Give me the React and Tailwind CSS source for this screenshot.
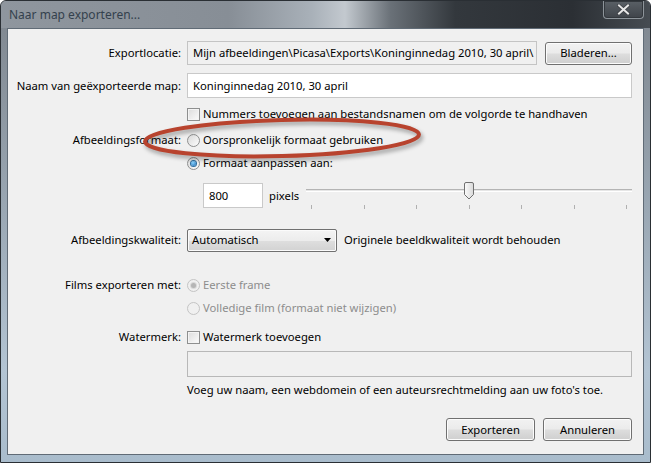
import React from 'react';

function Checkbox() {
    return (
        <span className="inline-block h-[13px] w-[13px] shrink-0 border border-[#8e8f8f] bg-[linear-gradient(135deg,#dcdcdc,#fbfbfb)] shadow-[inset_0_0_0_1px_#f4f4f4]" />
    );
}

function Radio({ checked = false, disabled = false }) {
    return (
        <span
            className={
                'relative inline-flex h-[13px] w-[13px] shrink-0 items-center justify-center rounded-full border ' +
                (disabled
                    ? 'border-[#c4c4c4] bg-[#f0f0f0]'
                    : 'border-[#8e8f8f] bg-[linear-gradient(135deg,#d8d8d8,#fdfdfd)]')
            }
        >
            {checked && (
                <span
                    className={
                        'h-[5px] w-[5px] rounded-full ' +
                        (disabled
                            ? 'bg-[#b5b5b5] shadow-[0_0_0_1px_#d9d9d9]'
                            : 'bg-[radial-gradient(circle_at_40%_35%,#8ad4ff,#1867b1)] shadow-[0_0_0_1px_#2d6e9e]')
                    }
                />
            )}
        </span>
    );
}

function Button({ children, className = '' }) {
    return (
        <div
            className={
                'flex h-[23px] items-center justify-center rounded-[3px] border border-[#707070] bg-[linear-gradient(180deg,#f2f2f2_0%,#ebebeb_48%,#dddddd_52%,#cfcfcf_100%)] shadow-[inset_0_0_0_1px_#fcfcfc] ' +
                className
            }
        >
            {children}
        </div>
    );
}

function Row({ label, className = '', children }) {
    return (
        <div className={'flex items-center ' + className}>
            <div className="w-[173px] shrink-0 text-right">{label}</div>
            <div className="ml-[6px] flex min-w-0 flex-1 items-center">{children}</div>
        </div>
    );
}

export default function App() {
    const ticks = [0, 1, 2, 3, 4, 5, 6];

    return (
        <div className="relative h-[463px] w-[651px] overflow-hidden bg-white font-['Noto_Sans',sans-serif] text-[11.25px] leading-none text-black">
            {/* Window frame */}
            <div className="flex h-full flex-col rounded-t-[6px] border border-[#2a2f34] bg-[linear-gradient(180deg,#7e858d_0%,#9aa7b3_45%,#b3c4d3_80%,#a9bccc_100%)]">
                {/* Title bar */}
                <div className="flex h-[27px] shrink-0 rounded-t-[5px] bg-[linear-gradient(90deg,#8f969e_0%,#878e96_35%,#a9b1b9_48%,#c3c9cf_53%,#6a7178_60%,#33383d_70%,#2b2f34_88%,#464c52_100%)]">
                    <div className="pl-[8px] pt-[8px] text-[12px] text-[#34414d]">Naar map exporteren...</div>
                    <div className="ml-auto mr-[6px] flex h-[18px] w-[41px] items-center justify-center rounded-b-[4px] border border-t-0 border-[#8d949a] bg-[linear-gradient(180deg,#5a6066,#3f444a)] shadow-[inset_0_0_0_1px_#33383d]">
                        <svg width="13" height="11" viewBox="0 0 13 11">
                            <path d="M2 1.5 L11 9.5 M11 1.5 L2 9.5" stroke="#3b3f44" strokeWidth="3.6" strokeLinecap="square" />
                            <path d="M2 1.5 L11 9.5 M11 1.5 L2 9.5" stroke="#e6e6e6" strokeWidth="2" strokeLinecap="square" />
                        </svg>
                    </div>
                </div>

                {/* Client area */}
                <div className="flex min-h-0 flex-1 px-[6px] pb-[7px]">
                    <div className="flex flex-1 flex-col border border-[#606b76] bg-[#f0f0f0] pr-[11px]">
                        <Row label="Exportlocatie:" className="mt-[12px] h-[24px]">
                            <div className="flex h-[24px] min-w-0 flex-1 items-center overflow-hidden whitespace-nowrap border border-[#c4c4c4] bg-[#f0f0f0] pl-[5px]">
                                Mijn afbeeldingen\Picasa\Exports\Koninginnedag 2010, 30 april\
                            </div>
                            <Button className="ml-[8px] w-[87px] shrink-0">Bladeren...</Button>
                        </Row>

                        <Row label="Naam van geëxporteerde map:" className="mt-[8px] h-[25px]">
                            <div className="flex h-[25px] flex-1 items-center border border-[#c9c9c9] bg-white pl-[5px]">
                                Koninginnedag 2010, 30 april
                            </div>
                        </Row>

                        <Row label="" className="mt-[8px] h-[16px]">
                            <Checkbox />
                            <span className="ml-[3px]">Nummers toevoegen aan bestandsnamen om de volgorde te handhaven</span>
                        </Row>

                        <Row label="Afbeeldingsformaat:" className="mt-[10px] h-[16px]">
                            <Radio />
                            <span className="ml-[3px]">Oorspronkelijk formaat gebruiken</span>
                        </Row>

                        <Row label="" className="mt-[7px] h-[16px]">
                            <Radio checked />
                            <span className="ml-[3px]">Formaat aanpassen aan:</span>
                        </Row>

                        <Row label="" className="mt-[12px] h-[25px]">
                            <div className="ml-[16px] h-[25px] w-[60px] shrink-0 border border-[#c9c9c9] bg-white pl-[5px] pt-[6px]">
                                800
                            </div>
                            <span className="ml-[6px] w-[37px] shrink-0">pixels</span>
                            {/* Slider */}
                            <div className="flex h-[27px] flex-1 flex-col self-start">
                                <div className="relative h-[18px]">
                                    <div className="absolute left-0 right-0 top-[7px] h-[3px] border-y border-t-[#b4b4b4] border-b-white bg-[#e6e6e6]" />
                                    <svg className="absolute left-[calc(50%-6px)] top-0" width="12" height="18" viewBox="0 0 12 18">
                                        <defs>
                                            <linearGradient id="thumb" x1="0" y1="0" x2="1" y2="0">
                                                <stop offset="0" stopColor="#fbfbfb" />
                                                <stop offset="1" stopColor="#d9d9d9" />
                                            </linearGradient>
                                        </defs>
                                        <path d="M1.5 2 Q1.5 0.5 3 0.5 H9 Q10.5 0.5 10.5 2 V12.5 L6 17 L1.5 12.5 Z" fill="url(#thumb)" stroke="#707070" />
                                    </svg>
                                </div>
                                <div className="mt-[5px] flex h-[4px] justify-between px-[5px]">
                                    {ticks.map((t) => (
                                        <span key={t} className="h-[4px] w-px bg-[#b0b0b0]" />
                                    ))}
                                </div>
                            </div>
                        </Row>

                        <Row label="Afbeeldingskwaliteit:" className="mt-[20px] h-[24px]">
                            <div className="flex h-[23px] w-[150px] shrink-0 items-center rounded-[2px] border border-[#707070] bg-[linear-gradient(180deg,#f4f4f4_0%,#ececec_50%,#dedede_52%,#d2d2d2_100%)] pl-[4px] pr-[5px] shadow-[inset_0_0_0_1px_#fbfbfb]">
                                <span>Automatisch</span>
                                <svg className="ml-auto" width="7" height="4" viewBox="0 0 7 4">
                                    <path d="M0 0 H7 L3.5 4 Z" fill="#000" />
                                </svg>
                            </div>
                            <span className="ml-[7px]">Originele beeldkwaliteit wordt behouden</span>
                        </Row>

                        <Row label="Films exporteren met:" className="mt-[25px] h-[16px]">
                            <Radio checked disabled />
                            <span className="ml-[3px] text-[#8d8d8d]">Eerste frame</span>
                        </Row>

                        <Row label="" className="mt-[7px] h-[16px]">
                            <Radio disabled />
                            <span className="ml-[3px] text-[#8d8d8d]">Volledige film (formaat niet wijzigen)</span>
                        </Row>

                        <Row label="Watermerk:" className="mt-[13px] h-[16px]">
                            <Checkbox />
                            <span className="ml-[3px]">Watermerk toevoegen</span>
                        </Row>

                        <Row label="" className="mt-[6px] h-[26px]">
                            <div className="h-[26px] flex-1 border border-[#b8b8b8] bg-[#f0f0f0]" />
                        </Row>

                        <Row label="" className="mt-[5px] h-[16px]">
                            <span>Voeg uw naam, een webdomein of een auteursrechtmelding aan uw foto's toe.</span>
                        </Row>

                        <div className="mt-[20px] flex justify-end gap-[8px]">
                            <Button className="w-[89px]">Exporteren</Button>
                            <Button className="w-[89px]">Annuleren</Button>
                        </div>
                    </div>
                </div>
            </div>

            {/* Red annotation ellipse */}
            <svg className="pointer-events-none absolute inset-0 drop-shadow-[2px_3px_2px_rgba(0,0,0,0.35)]" width="651" height="463" viewBox="0 0 651 463">
                <ellipse cx="282" cy="138" rx="137" ry="18" transform="rotate(-1.5 282 138)" fill="none" stroke="#b8432e" strokeWidth="4" />
            </svg>
        </div>
    );
}
